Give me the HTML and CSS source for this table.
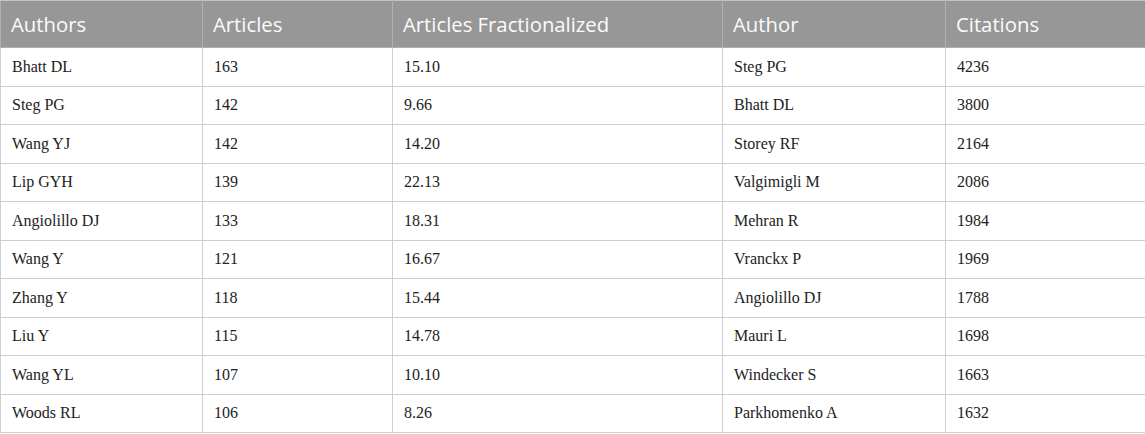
FILE: index.html
```html
<!DOCTYPE html>
<html>
<head>
<meta charset="utf-8">
<link rel="stylesheet" href="styles.css">
</head>
<body>
<table class="data">
  <colgroup>
    <col class="c1"><col class="c2"><col class="c3"><col class="c4"><col class="c5">
  </colgroup>
  <thead>
    <tr><th>Authors</th><th>Articles</th><th>Articles Fractionalized</th><th>Author</th><th>Citations</th></tr>
  </thead>
  <tbody>
    <tr><td>Bhatt DL</td><td>163</td><td>15.10</td><td>Steg PG</td><td>4236</td></tr>
    <tr><td>Steg PG</td><td>142</td><td>9.66</td><td>Bhatt DL</td><td>3800</td></tr>
    <tr><td>Wang YJ</td><td>142</td><td>14.20</td><td>Storey RF</td><td>2164</td></tr>
    <tr><td>Lip GYH</td><td>139</td><td>22.13</td><td>Valgimigli M</td><td>2086</td></tr>
    <tr><td>Angiolillo DJ</td><td>133</td><td>18.31</td><td>Mehran R</td><td>1984</td></tr>
    <tr><td>Wang Y</td><td>121</td><td>16.67</td><td>Vranckx P</td><td>1969</td></tr>
    <tr><td>Zhang Y</td><td>118</td><td>15.44</td><td>Angiolillo DJ</td><td>1788</td></tr>
    <tr><td>Liu Y</td><td>115</td><td>14.78</td><td>Mauri L</td><td>1698</td></tr>
    <tr><td>Wang YL</td><td>107</td><td>10.10</td><td>Windecker S</td><td>1663</td></tr>
    <tr><td>Woods RL</td><td>106</td><td>8.26</td><td>Parkhomenko A</td><td>1632</td></tr>
  </tbody>
</table>
</body>
</html>
```
FILE: styles.css
```css
html, body {
  margin: 0;
  padding: 0;
  background: #ffffff;
}
.data {
  width: 1145px;
  border-collapse: collapse;
  table-layout: fixed;
}
.c1 { width: 202px; }
.c2 { width: 190px; }
.c3 { width: 330px; }
.c4 { width: 223px; }
.c5 { width: 200px; }
.data th {
  background: #979797;
  color: #fbfbfb;
  font-family: "Open Sans", "Noto Sans", sans-serif;
  font-size: 20.3px;
  font-weight: 400;
  text-align: left;
  height: 47px;
  padding: 0 0 0 10px;
  border: 1px solid #b0b0b0;
  border-top-color: #c4c4c4;
  box-sizing: border-box;
}
.data td {
  font-family: "Liberation Serif", "Times New Roman", serif;
  font-size: 16px;
  color: #222222;
  height: 38.5px;
  padding: 0 0 0 11px;
  border: 1px solid #cfcfcf;
  box-sizing: border-box;
}
```
